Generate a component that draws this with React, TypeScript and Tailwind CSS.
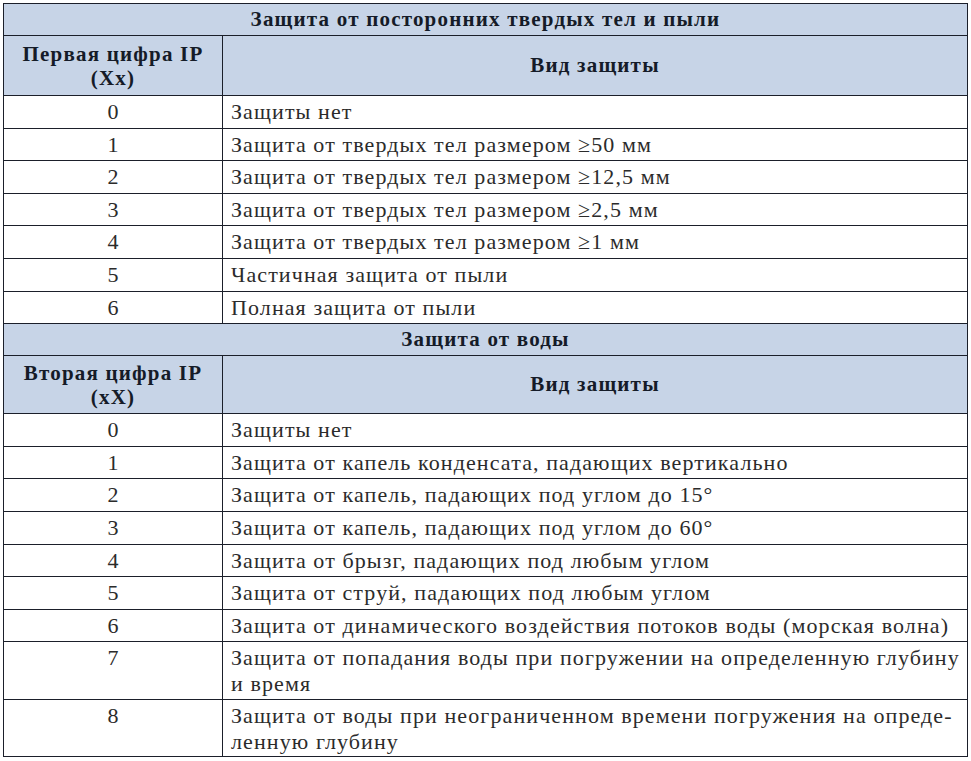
interface Row {
  n: string;
  lines: string[];
}

const dust: Row[] = [
  { n: '0', lines: ['Защиты нет'] },
  { n: '1', lines: ['Защита от твердых тел размером ≥50 мм'] },
  { n: '2', lines: ['Защита от твердых тел размером ≥12,5 мм'] },
  { n: '3', lines: ['Защита от твердых тел размером ≥2,5 мм'] },
  { n: '4', lines: ['Защита от твердых тел размером ≥1 мм'] },
  { n: '5', lines: ['Частичная защита от пыли'] },
  { n: '6', lines: ['Полная защита от пыли'] },
]

const water: Row[] = [
  { n: '0', lines: ['Защиты нет'] },
  { n: '1', lines: ['Защита от капель конденсата, падающих вертикально'] },
  { n: '2', lines: ['Защита от капель, падающих под углом до 15°'] },
  { n: '3', lines: ['Защита от капель, падающих под углом до 60°'] },
  { n: '4', lines: ['Защита от брызг, падающих под любым углом'] },
  { n: '5', lines: ['Защита от струй, падающих под любым углом'] },
  { n: '6', lines: ['Защита от динамического воздействия потоков воды (морская волна)'] },
  { n: '7', lines: ['Защита от попадания воды при погружении на определенную глубину', 'и время'] },
  { n: '8', lines: ['Защита от воды при неограниченном времени погружения на опреде-', 'ленную глубину'] },
]

function Section({
  title,
  digit,
  code,
  rows,
  headH,
}: {
  title: string;
  digit: string;
  code: string;
  rows: Row[];
  headH: string;
}) {
  return (
    <>
      <div className="h-[32px] flex items-center justify-center bg-[#c7d4e7] border-b border-[#1b1f2a] font-bold text-[21px] tracking-[1.2px] text-[#151b28]">
        {title}
      </div>
      <div className={`${headH} flex bg-[#c7d4e7] border-b border-[#1b1f2a] font-bold text-[21px] tracking-[1.2px] text-[#151b28]`}>
        <div className="w-[219px] shrink-0 border-r border-[#1b1f2a] flex flex-col items-center justify-center leading-[24px]">
          <span>{digit}</span>
          <span>{code}</span>
        </div>
        <div className="flex-1 flex items-center justify-center">Вид защиты</div>
      </div>
      {rows.map((r) => (
        <div
          key={r.n}
          className={`${r.lines.length > 1 ? (r.n === '8' ? 'h-[57px]' : 'h-[58px]') : 'h-[32.6px]'} flex border-b border-[#1b1f2a] text-[22px] leading-[26px] text-[#2b2b2b]`}
        >
          <div className="w-[219px] shrink-0 border-r border-[#1b1f2a] text-center pt-[3px]">{r.n}</div>
          <div className="flex-1 min-w-0 pl-[8px] pt-[3px] whitespace-nowrap tracking-[1.1px]">
            {r.lines.map((l, i) => (
              <div key={i}>{l}</div>
            ))}
          </div>
        </div>
      ))}
    </>
  )
}

export default function App() {
  return (
    <div className="w-[971px] h-[761px] bg-white pt-[3px] pl-[3px] font-['Liberation_Serif','Times_New_Roman',serif]">
      <div className="w-[965px] border-t border-l border-r border-[#1b1f2a] flex flex-col">
        <Section
          title="Защита от посторонних твердых тел и пыли"
          digit="Первая цифра IP"
          code="(Xx)"
          rows={dust}
          headH="h-[60px]"
        />
        <Section title="Защита от воды" digit="Вторая цифра IP" code="(xX)" rows={water} headH="h-[58px]" />
      </div>
    </div>
  )
}
